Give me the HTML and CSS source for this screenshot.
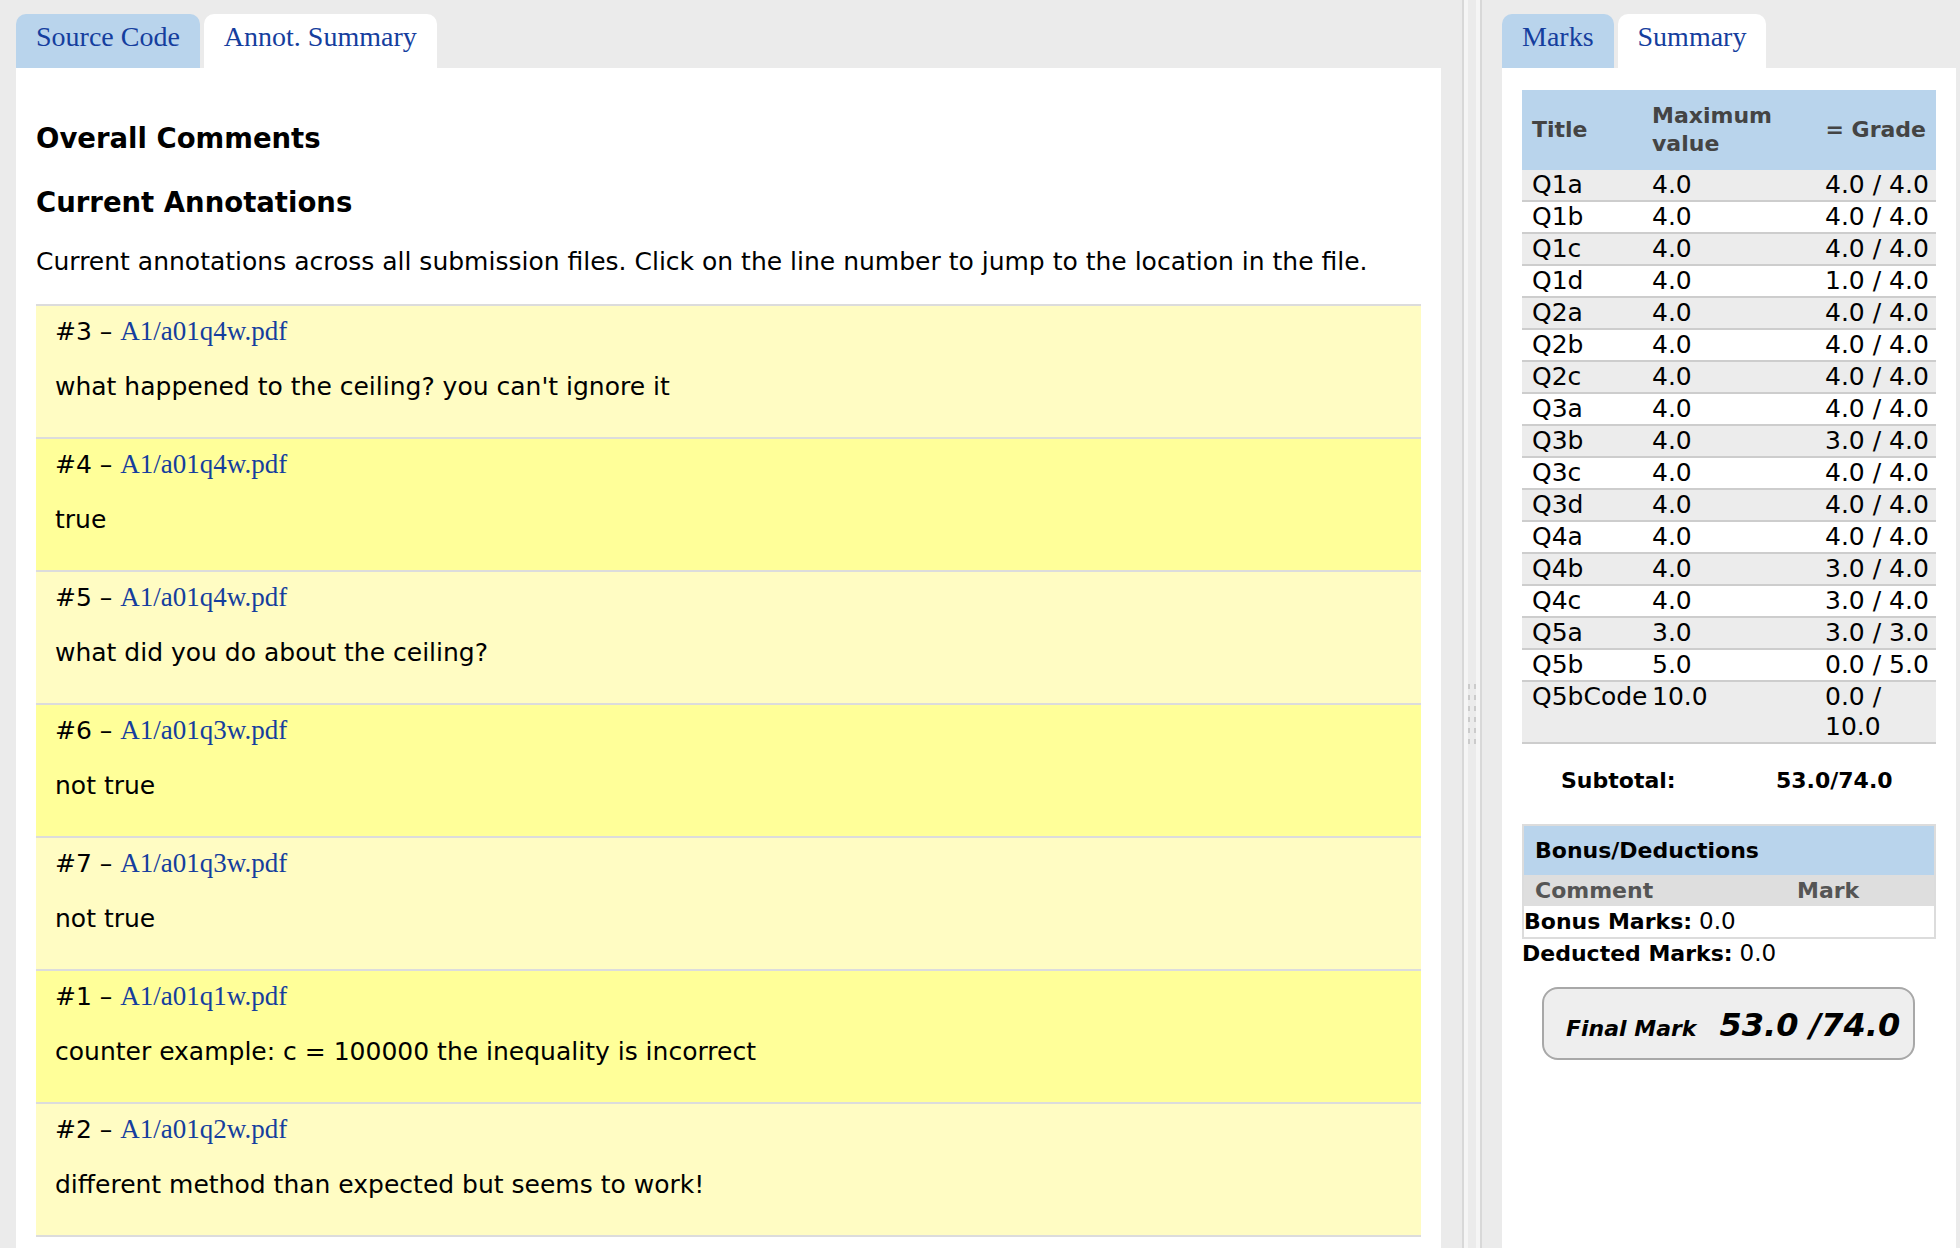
FILE: index.html
```html
<!DOCTYPE html>
<html lang="en">
<head>
<meta charset="utf-8">
<title>Annotation Summary</title>
<link rel="stylesheet" href="styles.css">
</head>
<body>
<div class="app">
  <section class="pane pane-left">
    <nav class="tabs">
      <a class="tab" href="#">Source Code</a>
      <a class="tab active" href="#">Annot. Summary</a>
    </nav>
    <div class="panel panel-left">
      <h2 class="first">Overall Comments</h2>
      <h2>Current Annotations</h2>
      <p class="intro">Current annotations across all submission files. Click on the line number to jump to the location in the file.</p>
      <ul class="annots">
        <li class="light"><div class="label">#3 – <a href="#">A1/a01q4w.pdf</a></div><p>what happened to the ceiling? you can't ignore it</p></li>
        <li class="strong"><div class="label">#4 – <a href="#">A1/a01q4w.pdf</a></div><p>true</p></li>
        <li class="light"><div class="label">#5 – <a href="#">A1/a01q4w.pdf</a></div><p>what did you do about the ceiling?</p></li>
        <li class="strong"><div class="label">#6 – <a href="#">A1/a01q3w.pdf</a></div><p>not true</p></li>
        <li class="light"><div class="label">#7 – <a href="#">A1/a01q3w.pdf</a></div><p>not true</p></li>
        <li class="strong"><div class="label">#1 – <a href="#">A1/a01q1w.pdf</a></div><p>counter example: c = 100000 the inequality is incorrect</p></li>
        <li class="light last"><div class="label">#2 – <a href="#">A1/a01q2w.pdf</a></div><p>different method than expected but seems to work!</p></li>
      </ul>
    </div>
  </section>

  <div class="splitter"><div class="grip"></div></div>

  <section class="pane pane-right">
    <nav class="tabs">
      <a class="tab" href="#">Marks</a>
      <a class="tab active" href="#">Summary</a>
    </nav>
    <div class="panel panel-right">
      <table class="marks">
        <colgroup><col class="c1"><col class="c2"><col class="c3"></colgroup>
        <thead>
          <tr><th>Title</th><th>Maximum value</th><th class="grade">= Grade</th></tr>
        </thead>
        <tbody>
          <tr><td>Q1a</td><td>4.0</td><td class="grade">4.0 / 4.0</td></tr>
          <tr><td>Q1b</td><td>4.0</td><td class="grade">4.0 / 4.0</td></tr>
          <tr><td>Q1c</td><td>4.0</td><td class="grade">4.0 / 4.0</td></tr>
          <tr><td>Q1d</td><td>4.0</td><td class="grade">1.0 / 4.0</td></tr>
          <tr><td>Q2a</td><td>4.0</td><td class="grade">4.0 / 4.0</td></tr>
          <tr><td>Q2b</td><td>4.0</td><td class="grade">4.0 / 4.0</td></tr>
          <tr><td>Q2c</td><td>4.0</td><td class="grade">4.0 / 4.0</td></tr>
          <tr><td>Q3a</td><td>4.0</td><td class="grade">4.0 / 4.0</td></tr>
          <tr><td>Q3b</td><td>4.0</td><td class="grade">3.0 / 4.0</td></tr>
          <tr><td>Q3c</td><td>4.0</td><td class="grade">4.0 / 4.0</td></tr>
          <tr><td>Q3d</td><td>4.0</td><td class="grade">4.0 / 4.0</td></tr>
          <tr><td>Q4a</td><td>4.0</td><td class="grade">4.0 / 4.0</td></tr>
          <tr><td>Q4b</td><td>4.0</td><td class="grade">3.0 / 4.0</td></tr>
          <tr><td>Q4c</td><td>4.0</td><td class="grade">3.0 / 4.0</td></tr>
          <tr><td>Q5a</td><td>3.0</td><td class="grade">3.0 / 3.0</td></tr>
          <tr><td>Q5b</td><td>5.0</td><td class="grade">0.0 / 5.0</td></tr>
          <tr><td>Q5bCode</td><td>10.0</td><td class="grade">0.0 / 10.0</td></tr>
        </tbody>
      </table>

      <div class="subtotal"><span class="sub-label">Subtotal:</span><span>53.0/74.0</span></div>

      <div class="bonus">
        <div class="bonus-head">Bonus/Deductions</div>
        <div class="bonus-cols"><span>Comment</span><span>Mark</span></div>
        <div class="bonus-row"><b>Bonus Marks:</b> <span class="num">0.0</span></div>
      </div>
      <div class="deducted"><b>Deducted Marks:</b> <span class="num">0.0</span></div>

      <div class="final">
        <span class="final-label">Final Mark</span>
        <span class="final-value">53.0 /74.0</span>
      </div>
    </div>
  </section>
</div>
</body>
</html>
```

FILE: styles.css
```css
* { box-sizing: border-box; }

html, body {
  margin: 0;
  padding: 0;
}

body {
  background: #ebebeb;
  font-family: "DejaVu Sans", "Noto Sans", sans-serif;
  font-size: 25px;
  color: #000;
  overflow: hidden;
}

.app {
  display: flex;
  height: 1248px;
}

.pane {
  display: flex;
  flex-direction: column;
  padding-top: 14px;
}

.pane-left {
  width: 1425px;
  margin-left: 16px;
}

.pane-right {
  width: 454px;
  margin-right: 4px;
}

/* splitter between the two panes */
.splitter {
  width: 20px;
  margin: 0 20px 0 21px;
  border-left: 2px solid #d8d8d8;
  border-right: 2px solid #d8d8d8;
  background: #ebebeb;
  box-shadow: inset 4px 0 0 #f5f5f5, inset -4px 0 0 #f5f5f5;
}

.grip {
  width: 8px;
  height: 60px;
  margin: 684px 0 0 4px;
  background:
    repeating-linear-gradient(#cbcbcb 0 5px, transparent 5px 11px) 0 0 / 2px 100% no-repeat,
    repeating-linear-gradient(#cbcbcb 0 5px, transparent 5px 11px) 6px 0 / 2px 100% no-repeat;
}

/* tabs */
.tabs {
  display: flex;
  gap: 4px;
  height: 54px;
  flex: none;
}

.tab {
  font-family: "Liberation Serif", "DejaVu Serif", serif;
  font-size: 28px;
  line-height: 30px;
  color: #153e9e;
  text-decoration: none;
  padding: 8px 20px 0;
  border-radius: 10px 10px 0 0;
  background: #b9d4ec;
}

.tab.active {
  background: #fff;
}

.panel {
  flex: 1;
  background: #fff;
}

/* left panel */
.panel-left {
  padding: 0 20px;
}

.panel-left h2 {
  font-size: 27.5px;
  line-height: 36px;
  font-weight: bold;
  margin: 28px 0 0;
}

.panel-left h2.first {
  margin-top: 52px;
}

.intro {
  margin: 24px 0 0;
  line-height: 36px;
}

.annots {
  list-style: none;
  margin: 24px 0 0;
  padding: 0;
}

.annots li {
  border-top: 2px solid #dcdcdc;
  padding: 8px 19px 32px;
  line-height: 36px;
}

.annots li.last {
  border-bottom: 2px solid #dcdcdc;
}

.annots li.light { background: #fffcc3; }
.annots li.strong { background: #ffff99; }

.annots .label {
  height: 36px;
}

.annots .label a {
  font-family: "Liberation Serif", "DejaVu Serif", serif;
  font-size: 27px;
  line-height: 1;
  color: #153e9e;
  text-decoration: none;
}

.annots p {
  margin: 19px 0 0;
}

/* right panel */
.panel-right {
  padding: 22px 20px 0;
}

.marks {
  width: 100%;
  table-layout: fixed;
  border-collapse: separate;
  border-spacing: 0;
}

.marks col.c1 { width: 120px; }
.marks col.c2 { width: 178px; }
.marks col.c3 { width: 116px; }

.marks th {
  background: #b9d4ec;
  color: #444;
  font-size: 22px;
  line-height: 28px;
  font-weight: bold;
  text-align: left;
  vertical-align: middle;
  padding: 12px 6px 12px 10px;
}

.marks th.grade {
  text-align: right;
  white-space: nowrap;
  padding: 12px 10px 12px 0;
}

.marks td {
  line-height: 30px;
  padding: 0 6px 0 10px;
  border-bottom: 2px solid #cdcdcd;
  vertical-align: top;
  white-space: nowrap;
}

.marks td.grade {
  padding: 0 5px 0 5px;
  white-space: normal;
}

.marks tbody tr:nth-child(odd) td { background: #ececec; }
.marks tbody tr:nth-child(even) td { background: #fff; }

.subtotal {
  display: flex;
  margin-top: 22px;
  padding-left: 39px;
  font-weight: bold;
  font-size: 22px;
  line-height: 30px;
}

.sub-label {
  width: 215px;
}

.bonus {
  margin-top: 28px;
  border: 2px solid #dcdcdc;
}

.bonus-head {
  background: #b9d4ec;
  font-weight: bold;
  font-size: 22px;
  line-height: 49px;
  padding-left: 11px;
}

.bonus-cols {
  display: grid;
  grid-template-columns: 262px 1fr;
  background: #dedede;
  color: #555;
  font-weight: bold;
  font-size: 22px;
  line-height: 31px;
}

.bonus-cols span {
  padding-left: 11px;
}

.bonus-row {
  background: #fff;
  font-size: 22px;
  line-height: 30px;
}

.deducted {
  font-size: 22px;
  line-height: 29px;
}

.num {
  font-size: 23px;
}

.final {
  display: flex;
  align-items: baseline;
  height: 73px;
  margin: 19px 21px 0 20px;
  padding: 4px 0 0 22px;
  line-height: 65px;
  background: #eeeeee;
  border: 2px solid #a8a8a8;
  border-radius: 16px;
  font-style: italic;
  font-weight: bold;
}

.final-label {
  font-size: 22px;
}

.final-value {
  font-size: 32px;
  margin-left: 23px;
}
```
